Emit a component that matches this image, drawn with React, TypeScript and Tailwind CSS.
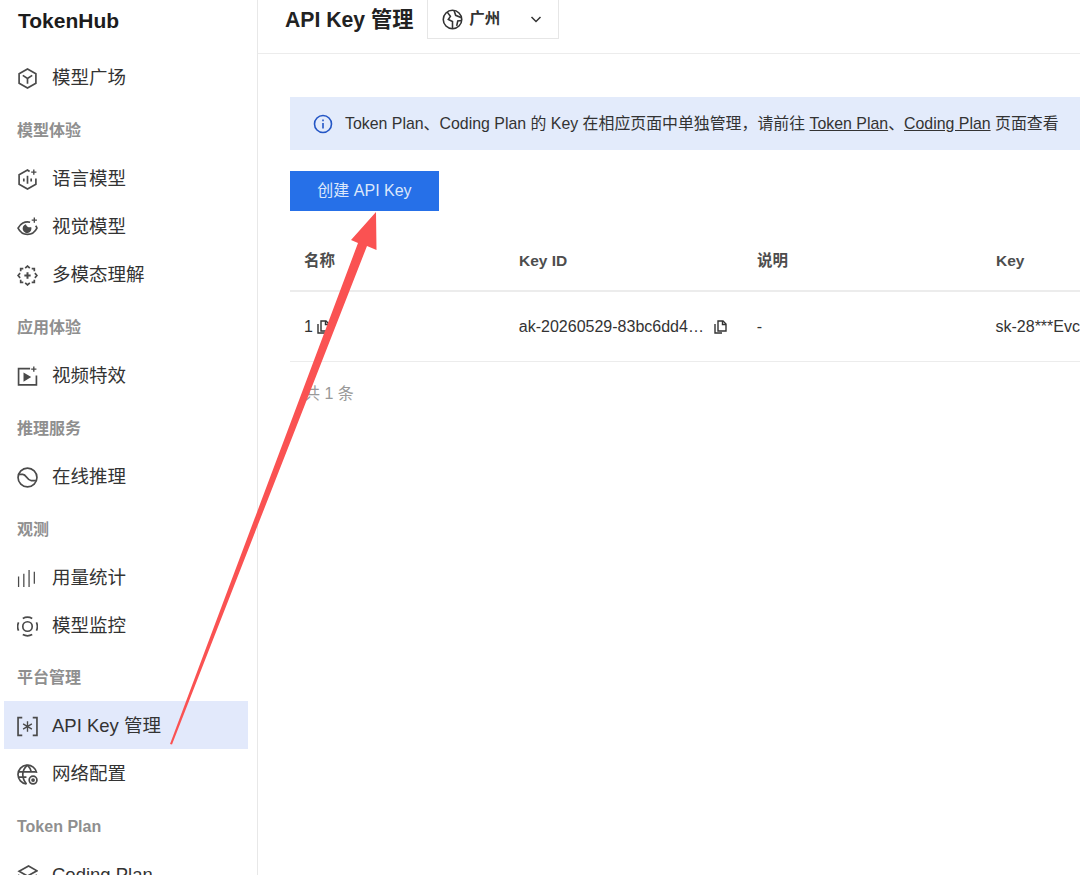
import type { ReactNode } from "react";

const font = "font-['Liberation_Sans','Noto_Sans_CJK_SC',sans-serif]";

function Svg({ children }: { children: ReactNode }) {
  return (
    <svg
      viewBox="0 0 20 20"
      fill="none"
      stroke="currentColor"
      strokeWidth="1.600"
      className="h-[21px] w-[21px] shrink-0"
    >
      {children}
    </svg>
  );
}

const icons: Record<string, ReactNode> = {
  cube: (
    <Svg>
      <path d="M10 1 18 5.500v9L10 19l-8-4.500v-9z" />
      <path d="M5.500 7 10 10l4.500-3M10 10v5" />
    </Svg>
  ),
  lang: (
    <Svg>
      <path d="M12 2.400 10 1 2 5.500v9L10 19l8-4.500V9" />
      <path d="M6.500 9v3M10 6.500v7.500M13.500 9v3" />
      <path d="M16 .5v5M13.500 3h5" strokeWidth="1.300" />
    </Svg>
  ),
  vision: (
    <Svg>
      <path d="M12.500 5C7.500 3.600 3 6.500 1 10.500c2 4 5 6 9 6s7-2 9-6c-.3-.8-.7-1.500-1.200-2.200" />
      <path d="M13.500 9.500a4.200 4.200 0 1 1-5-2.600 3.500 3.500 0 0 0 5 2.600z" fill="currentColor" stroke="none" />
      <path d="M16.500 .5v5M14 3h5" strokeWidth="1.300" />
    </Svg>
  ),
  multi: (
    <Svg>
      <path d="M7.800 3 10 1l2.200 2M7.800 17l2.200 2 2.200-2M3 7.800 1 10l2 2.200M17 7.800l2 2.200-2 2.200" />
      <path d="M3.500 6V3.500H6M14 3.500h2.500V6M3.500 14v2.500H6M14 16.500h2.500V14" />
      <path d="M10 7v6M7 10h6" strokeWidth="1.900" />
    </Svg>
  ),
  video: (
    <Svg>
      <path d="M12.500 2.500H1.500v15.500h17V9" />
      <path d="M7 7.500v6l5-3z" fill="currentColor" />
      <path d="M16 .5v5M13.500 3h5" strokeWidth="1.300" />
    </Svg>
  ),
  online: (
    <Svg>
      <circle cx="10" cy="10" r="9" />
      <path d="M2 7h3.500c3.500 0 4 6 8 6H18" />
    </Svg>
  ),
  stats: (
    <Svg>
      <path d="M1.500 8v10M6.500 5.500V18M11.500 2v16M16.500 3.500V15" strokeWidth="1.200" />
    </Svg>
  ),
  monitor: (
    <Svg>
      <circle cx="10" cy="10" r="4.500" />
      <path d="M5.500 2.300a9.500 9.500 0 0 1 9 0M5.500 17.700a9.500 9.500 0 0 0 9 0M1.500 6a9.500 9.500 0 0 0 0 8M18.500 6a9.500 9.500 0 0 1 0 8" />
    </Svg>
  ),
  key: (
    <Svg>
      <path d="M5 1.500H1v17h4M15 1.500h4v17h-4" />
      <path d="M10 5v10M5.800 7.500l8.400 5M14.200 7.500l-8.400 5" strokeWidth="1.300" />
    </Svg>
  ),
  network: (
    <Svg>
      <path d="M18.800 8.500A9 9 0 1 0 9 19" />
      <path d="M10 1C6.500 4 5.500 7 5.500 10s1 6 3.500 9M10 1c2.500 2.500 3.500 5 3.800 7M1.500 7.500H18M1.500 12.500H9" />
      <circle cx="15.300" cy="15.300" r="3.700" />
      <circle cx="15.300" cy="15.300" r="1" fill="currentColor" />
    </Svg>
  ),
  coding: (
    <Svg>
      <path d="m11 1 8 4.500-9 5-8-4.500z" />
      <path d="m1 9.500 9 5 9-5M2 14l8 4.500 8-4.500" />
    </Svg>
  ),
};

function NavItem({ icon, label, active }: { icon: string; label: string; active?: boolean }) {
  return (
    <div
      className={
        "mx-1 flex h-12 w-[244px] items-center gap-[14px] pt-[2px] pl-[13px] text-[18.500px] text-[#333] " +
        (active ? "bg-[#e2e9fb]" : "")
      }
    >
      <span className="text-[#4a4a4a]">{icons[icon]}</span>
      <span className="whitespace-nowrap">{label}</span>
    </div>
  );
}

function Section({ label, short }: { label: string; short?: boolean }) {
  return (
    <div
      className={
        "flex items-center pt-[6px] pl-[17px] text-[16px] font-bold text-[#8f8f8f] " +
        (short ? "h-[52px]" : "h-[53px]")
      }
    >
      {label}
    </div>
  );
}

function CopyIcon() {
  return (
    <svg viewBox="0 0 14 14" fill="none" stroke="currentColor" strokeWidth="1.400" className="h-[14px] w-[14px]">
      <path d="M1 4v9h7" />
      <path d="M4 1h5l3 3v7H4z" />
      <path d="M8.500 1v3.500H12" />
    </svg>
  );
}

function Sidebar() {
  return (
    <aside className="w-[258px] shrink-0 overflow-hidden border-r border-[#e8e8e8]">
      <div className="flex h-[42px] items-center pl-[18px] text-[21px] font-bold text-[#1c1c1c]">TokenHub</div>
      <div className="h-[11px]" />
      <NavItem icon="cube" label="模型广场" />
      <Section label="模型体验" />
      <NavItem icon="lang" label="语言模型" />
      <NavItem icon="vision" label="视觉模型" />
      <NavItem icon="multi" label="多模态理解" />
      <Section label="应用体验" />
      <NavItem icon="video" label="视频特效" />
      <Section label="推理服务" />
      <NavItem icon="online" label="在线推理" />
      <Section label="观测" />
      <NavItem icon="stats" label="用量统计" />
      <NavItem icon="monitor" label="模型监控" />
      <Section label="平台管理" short />
      <NavItem icon="key" label="API Key 管理" active />
      <NavItem icon="network" label="网络配置" />
      <Section label="Token Plan" />
      <NavItem icon="coding" label="Coding Plan" />
    </aside>
  );
}

function Header() {
  return (
    <header className="flex h-[54px] items-start border-b border-[#ececec] pl-[27px]">
      <h1 className="mt-[4px] text-[21.200px] leading-[32px] font-bold text-[#222]">API Key 管理</h1>
      <div className="ml-[14px] flex h-[39px] w-[132px] items-center border border-t-0 border-[#e6e6e6] pl-[14px] text-[#333]">
        <svg viewBox="0 0 20 20" fill="none" stroke="currentColor" strokeWidth="1.500" className="h-[21px] w-[21px]">
          <circle cx="10" cy="10" r="8.800" />
          <path d="M5 3 8 7 6 10l4 2v6M18 8l-5-2-1.500-4.500M18.500 11l-3.500.5-1 4.500" />
        </svg>
        <span className="ml-[6px] text-[15.500px] font-bold">广州</span>
        <svg viewBox="0 0 12 12" fill="none" stroke="currentColor" strokeWidth="1.500" className="ml-[30px] h-3 w-3">
          <path d="m1.500 4 4.500 4.500L10.500 4" />
        </svg>
      </div>
    </header>
  );
}

function Table() {
  return (
    <div className="mt-[21px] w-[790px] text-[#333]">
      <div className="flex h-[60px] items-center border-b-2 border-[#ececec] text-[15.500px] font-bold text-[#4d4d4d]">
        <div className="w-[229px] pl-[14px]">名称</div>
        <div className="w-[238px]">Key ID</div>
        <div className="w-[239px]">说明</div>
        <div>Key</div>
      </div>
      <div className="flex h-[70px] items-center border-b border-[#ececec] pt-[1px] text-[16px]">
        <div className="flex w-[229px] items-center gap-[4px] pl-[14px]">
          1<CopyIcon />
        </div>
        <div className="flex w-[238px] items-center">
          <span className="w-[195px] whitespace-nowrap">ak-20260529-83bc6dd4…</span>
          <CopyIcon />
        </div>
        <div className="w-[239px]">-</div>
        <div className="whitespace-nowrap">sk-28***Evc</div>
      </div>
      <div className="mt-[20px] pl-[14px] text-[16px] text-[#999]">共 1 条</div>
    </div>
  );
}

function Arrow() {
  return (
    <svg viewBox="0 0 1080 875" className="pointer-events-none absolute inset-0 h-[875px] w-[1080px]">
      <path d="M170 744 L172 744.500 L367 246 L376.500 250 L376 212 L351 240 L358 243 Z" fill="#fa5252" />
    </svg>
  );
}

export default function App() {
  return (
    <div className={"relative flex h-[875px] w-[1080px] overflow-hidden bg-white " + font}>
      <Sidebar />
      <main className="min-w-0 flex-1 overflow-hidden">
        <Header />
        <div className="pl-[32px]">
          <div className="mt-[43px] flex h-[53px] w-[800px] items-center bg-[#e3ebfb] pl-[23px] text-[15.900px] whitespace-nowrap text-[#333]">
            <svg viewBox="0 0 20 20" fill="none" stroke="#2456c5" strokeWidth="1.600" className="mr-[12px] h-5 w-5 shrink-0">
              <circle cx="10" cy="10" r="8.500" />
              <path d="M10 9v5.500M10 5.500v1.800" />
            </svg>
            <span>
              Token Plan、Coding Plan 的 Key 在相应页面中单独管理，请前往 <span className="underline">Token Plan</span>、
              <span className="underline">Coding Plan</span> 页面查看
            </span>
          </div>
          <button className="mt-[21px] block h-10 w-[149px] bg-[#2670e8] text-[16px] text-[#dbe7fb]">创建 API Key</button>
          <Table />
        </div>
      </main>
      <Arrow />
    </div>
  );
}
